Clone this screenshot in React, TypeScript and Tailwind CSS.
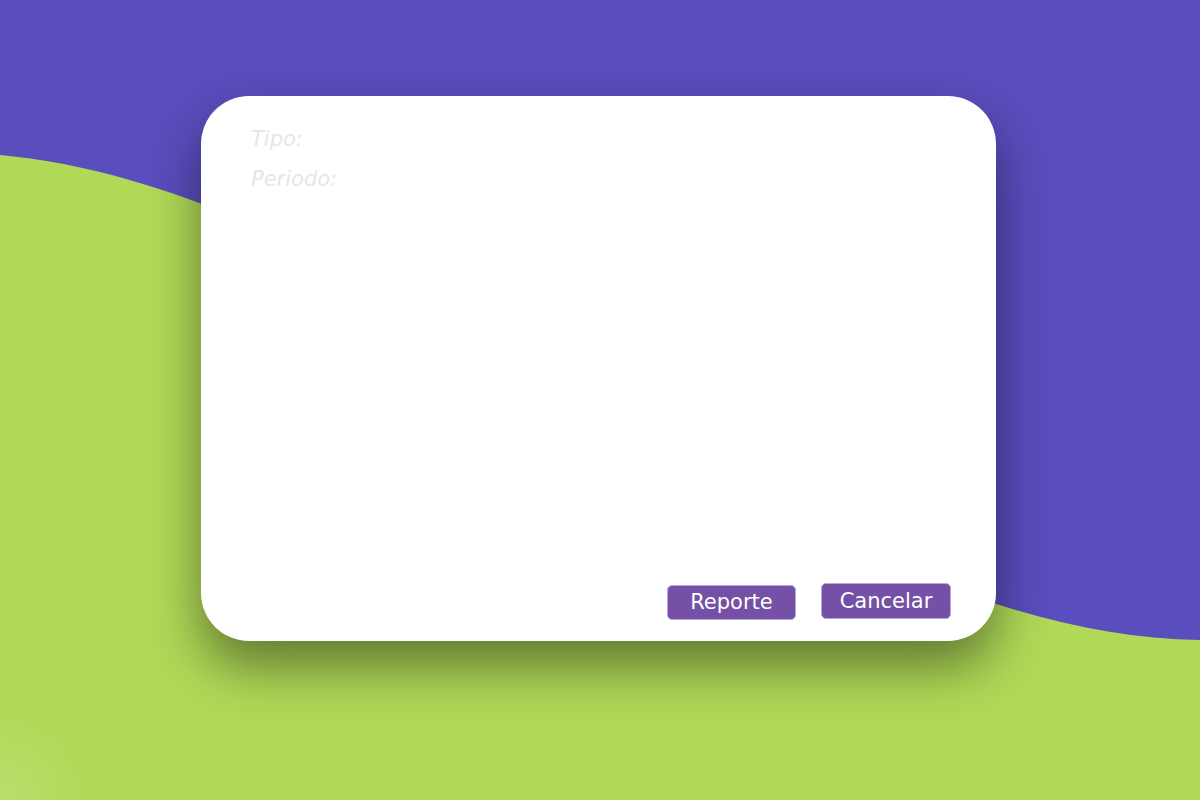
import * as React from "react"

function Wave() {
  return (
    <svg
      className="absolute inset-0 h-full w-full"
      viewBox="0 0 1200 800"
      preserveAspectRatio="none"
    >
      <defs>
        <radialGradient id="glow" cx="0" cy="800" r="90" gradientUnits="userSpaceOnUse">
          <stop offset="0" stopColor="#ffffff" stopOpacity="0.14" />
          <stop offset="1" stopColor="#ffffff" stopOpacity="0" />
        </radialGradient>
      </defs>
      <rect width="1200" height="800" fill="#5a4dbd" />
      <path d="M0 155 C400 191 800 636 1200 640 L1200 800 L0 800 Z" fill="#b0d957" />
      <rect width="1200" height="800" fill="url(#glow)" />
    </svg>
  )
}

export default function App() {
  return (
    <div className="relative h-[800px] w-[1200px] overflow-hidden font-['DejaVu_Sans',sans-serif]">
      <Wave />
      <div className="relative pl-[201px] pt-[96px]">
        <div className="flex h-[545px] w-[795px] flex-col justify-between rounded-[48px] bg-white pb-[21px] pl-[50px] pr-[45px] pt-[23px] shadow-[0_26px_52px_rgba(0,0,0,0.44)]">
          <div className="text-[21px] italic leading-[40px] text-[#e6e6e6]">
            <p>Tipo:</p>
            <p>Periodo:</p>
          </div>
          <div className="flex items-start justify-end gap-[25px]">
            <button className="mt-[2px] h-[35px] w-[129px] rounded-[5px] border border-[#b9a9d3] bg-[#7450a6] text-[21px] leading-none text-white">
              Reporte
            </button>
            <button className="h-[36px] w-[130px] rounded-[5px] border border-[#b9a9d3] bg-[#7450a6] text-[21px] leading-none text-white">
              Cancelar
            </button>
          </div>
        </div>
      </div>
    </div>
  )
}
